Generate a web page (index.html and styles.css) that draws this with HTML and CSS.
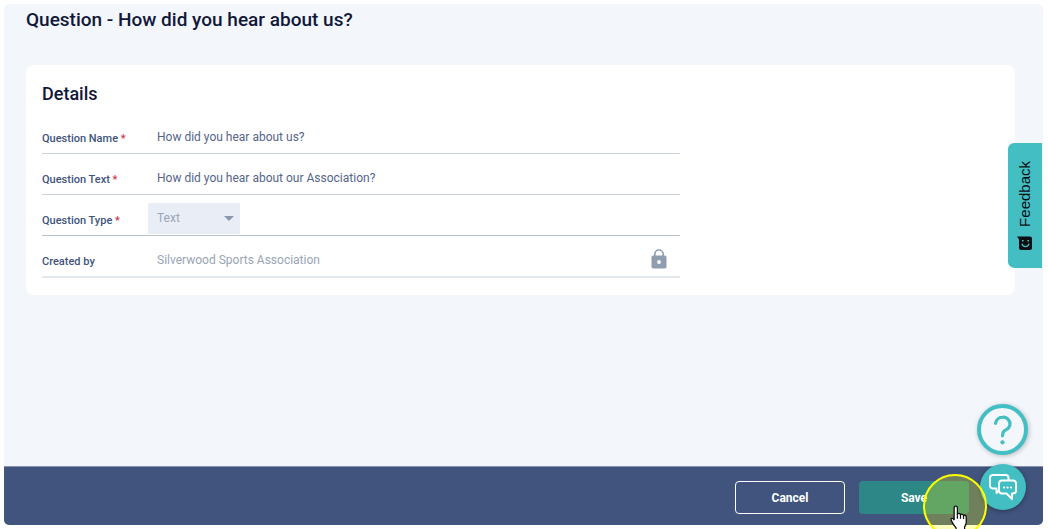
FILE: index.html
```html
<!DOCTYPE html>
<html lang="en">
<head>
  <meta charset="UTF-8">
  <meta name="viewport" content="width=device-width, initial-scale=1.0">
  <title>Question - How did you hear about us?</title>
  <link rel="stylesheet" href="styles.css">
</head>
<body>
  <div class="app">
    <main class="content">
      <h1 class="page-title">Question - How did you hear about us?</h1>

      <!-- Question details -->
      <section class="card">
        <h2 class="card-title">Details</h2>
        <form id="questionForm" class="question-form">
          <div class="form-row">
            <label for="questionName">Question Name <span class="required">*</span></label>
            <input type="text" id="questionName" name="questionName" value="How did you hear about us?">
          </div>
          <div class="form-row">
            <label for="questionText">Question Text <span class="required">*</span></label>
            <input type="text" id="questionText" name="questionText" value="How did you hear about our Association?">
          </div>
          <div class="form-row row-type">
            <label for="questionType">Question Type <span class="required">*</span></label>
            <div class="select-wrap">
              <select id="questionType" name="questionType" disabled>
                <option>Text</option>
              </select>
              <svg class="arrow" width="10" height="5" viewBox="0 0 10 5"><path d="M0 0h10L5 5z" fill="#8a98ad"/></svg>
            </div>
          </div>
          <div class="form-row row-locked">
            <label for="createdBy">Created by</label>
            <input type="text" id="createdBy" name="createdBy" value="Silverwood Sports Association" disabled>
            <svg class="lock" width="16" height="20" viewBox="0 0 16 20">
              <path d="M3.8 8V5.2a4.2 4.2 0 0 1 8.4 0V8" fill="none" stroke="#8f9db1" stroke-width="1.7"/>
              <rect x="0.5" y="6.5" width="15" height="13" rx="1.8" fill="#8f9db1"/>
              <circle cx="8" cy="13" r="1.9" fill="#fff"/>
            </svg>
          </div>
        </form>
      </section>
    </main>

    <!-- Actions -->
    <footer class="actions">
      <button type="button" class="btn btn-cancel">Cancel</button>
      <button type="submit" form="questionForm" class="btn btn-save">Save</button>
    </footer>
  </div>

  <!-- Feedback tab -->
  <button type="button" class="feedback">
    <svg width="15" height="14" viewBox="0 0 15 14">
      <path d="M0 .5h13q2 0 2 2V12q0 2-2 2H4q-2 0-2-2V3.500z" fill="#0b0f12"/>
      <path d="M5 7.800q.4 2.900 3.500 2.900T12 7.800" fill="none" stroke="#43bfc4" stroke-width="1.200"/>
      <path d="M5 4.800h1.600M10.400 4.800H12" stroke="#43bfc4" stroke-width="1.400"/>
    </svg>
    <span>Feedback</span>
  </button>

  <!-- Help and chat -->
  <div class="widgets">
    <button type="button" class="help" aria-label="Help">
      <svg width="20" height="30" viewBox="0 0 20 30" fill="none" stroke="#43bfc4" stroke-width="3.200" stroke-linecap="round">
        <path d="M2.500 8.300A7.300 7.300 0 0 1 9.700 2.200a6.900 6.900 0 0 1 7.300 6.800c0 3-2 4.800-4.300 5.900-2.500 1.200-3.200 2.300-3.200 5.800"/>
        <circle cx="9.500" cy="27.300" r="2.100" fill="#43bfc4" stroke="none"/>
      </svg>
    </button>
    <button type="button" class="chat" aria-label="Chat">
      <svg width="28" height="28" viewBox="0 0 28 28" fill="none" stroke="#fff" stroke-width="1.900" stroke-linejoin="round" stroke-linecap="round">
        <path d="M7.500 20V15.500H4q-3 0-3-3V5q0-3 3-3h12.500q3 0 3 3v2M7.500 20l2.500-2.500"/>
        <path d="M13 7.500h11q3 0 3 3v7q0 3-3 3h-1V26l-5.500-5.500H13q-3 0-3-3v-7q0-3 3-3z"/>
        <path d="M15 14.500h.1M18.500 14.500h.1M22 14.500h.1" stroke-width="2.200"/>
      </svg>
    </button>
  </div>

  <!-- Mouse pointer with click highlight -->
  <div class="pointer">
    <svg width="22" height="27" viewBox="0 0 20 25">
      <path d="M5.500 2.600q0-1.600 1.500-1.600t1.500 1.600V9q0-1.200 1.400-1.200t1.500 1.600q.2-1 1.400-.9t1.400 1.600q.3-.8 1.300-.6t1.200 1.600V16q0 2.200-1.500 4.300V24H7.300v-2.800Q4.500 18 3 14.700q-.9-1.800.3-2.300t2.200 1.600z" fill="#fff" stroke="#111" stroke-width="1.200"/>
      <path d="M8.500 8.500v4.200M11.400 9v3.700M14.200 10v3" stroke="#111" stroke-width="1.100"/>
    </svg>
  </div>
</body>
</html>
```
FILE: styles.css
```css
* {
  box-sizing: border-box;
}

body {
  margin: 0;
  padding: 4px 5px 4px 4px;
  height: 100vh;
  position: relative;
  overflow: hidden;
  background-color: #fff;
  font-family: Roboto, "Liberation Sans", sans-serif;
}

button,
input,
select {
  font-family: inherit;
}

.app {
  display: flex;
  flex-direction: column;
  height: 100%;
  border-radius: 5px;
  overflow: hidden;
  background-color: #f3f6fb;
}

.content {
  flex: 1;
  padding: 4px 28px 0 22px;
}

.page-title {
  margin: 0 0 33px;
  font-size: 19px;
  line-height: 24px;
  font-weight: 500;
  color: #10183a;
}

.card {
  padding: 17px 16px;
  border-radius: 8px;
  background-color: #fff;
}

.card-title {
  margin: 0 0 7px;
  font-size: 18px;
  line-height: 24px;
  font-weight: 500;
  color: #10183a;
}

.question-form {
  max-width: 638px;
}

.form-row {
  display: flex;
  align-items: center;
  height: 41px;
  border-bottom: 1px solid #cdd3de;
}

.form-row label {
  width: 106px;
  padding-top: 11px;
  font-size: 11px;
  line-height: 16px;
  font-weight: 500;
  color: #41547d;
}

.required {
  color: #d0314c;
}

.form-row input {
  flex: 1;
  padding: 9px 9px 1px;
  border: none;
  outline: none;
  background: none;
  font-size: 12px;
  line-height: 20px;
  color: #54658a;
}

.form-row input:disabled {
  color: #9aa5b5;
}

.row-type {
  border-bottom-color: #b9c3d0;
}

.row-locked {
  height: 42px;
  border-bottom: 2px solid #e3e8ef;
}

.select-wrap {
  position: relative;
  padding-top: 6px;
}

.select-wrap select {
  display: block;
  width: 92px;
  height: 31px;
  padding: 0 9px;
  border: none;
  appearance: none;
  background-color: #e9eef6;
  font-size: 12px;
  color: #9aa5b5;
  opacity: 1;
}

.arrow {
  position: absolute;
  right: 6px;
  top: 19px;
}

.lock {
  margin: 5px 13px 0 0;
}

.actions {
  display: flex;
  justify-content: flex-end;
  gap: 14px;
  height: 59px;
  padding: 14px 74px 12px;
  border-top: 1px solid #8493b0;
  background-color: #40547d;
}

.btn {
  width: 110px;
  height: 33px;
  border-radius: 4px;
  font-size: 12px;
  font-weight: 700;
  color: #fff;
}

.btn-cancel {
  border: 1px solid #fff;
  background: none;
}

.btn-save {
  border: none;
  background-color: #2d8787;
}

.feedback {
  position: absolute;
  top: 143px;
  right: 6px;
  display: flex;
  align-items: center;
  gap: 9px;
  width: 34px;
  padding: 18px 9px;
  border: none;
  border-radius: 0 6px 6px 0;
  background-color: #43bfc4;
  font-family: "Liberation Sans", sans-serif;
  font-size: 15px;
  line-height: 16px;
  color: #0b0f12;
  writing-mode: vertical-rl;
  transform: rotate(180deg);
}

.feedback svg {
  transform: rotate(180deg);
}

.widgets {
  position: absolute;
  right: 20px;
  bottom: 19px;
  display: flex;
  flex-direction: column;
  align-items: center;
  gap: 9px;
}

.help,
.chat {
  display: flex;
  align-items: center;
  justify-content: center;
  padding: 0;
  border-radius: 50%;
}

.help {
  width: 51px;
  height: 51px;
  border: 4px solid #43bfc4;
  background-color: #f3f6fb;
  box-shadow: 1px 1px 5px rgba(0, 0, 0, 0.25);
}

.chat {
  width: 46px;
  height: 46px;
  border: none;
  background-color: #43bfc4;
  box-shadow: 0 1px 5px rgba(0, 0, 0, 0.35);
}

.pointer {
  position: absolute;
  right: 61px;
  bottom: -9px;
  width: 64px;
  height: 64px;
  padding: 29px 0 0 23px;
  border: 2px solid #ff0;
  border-radius: 50%;
  background-color: rgba(255, 255, 0, 0.26);
}
```
